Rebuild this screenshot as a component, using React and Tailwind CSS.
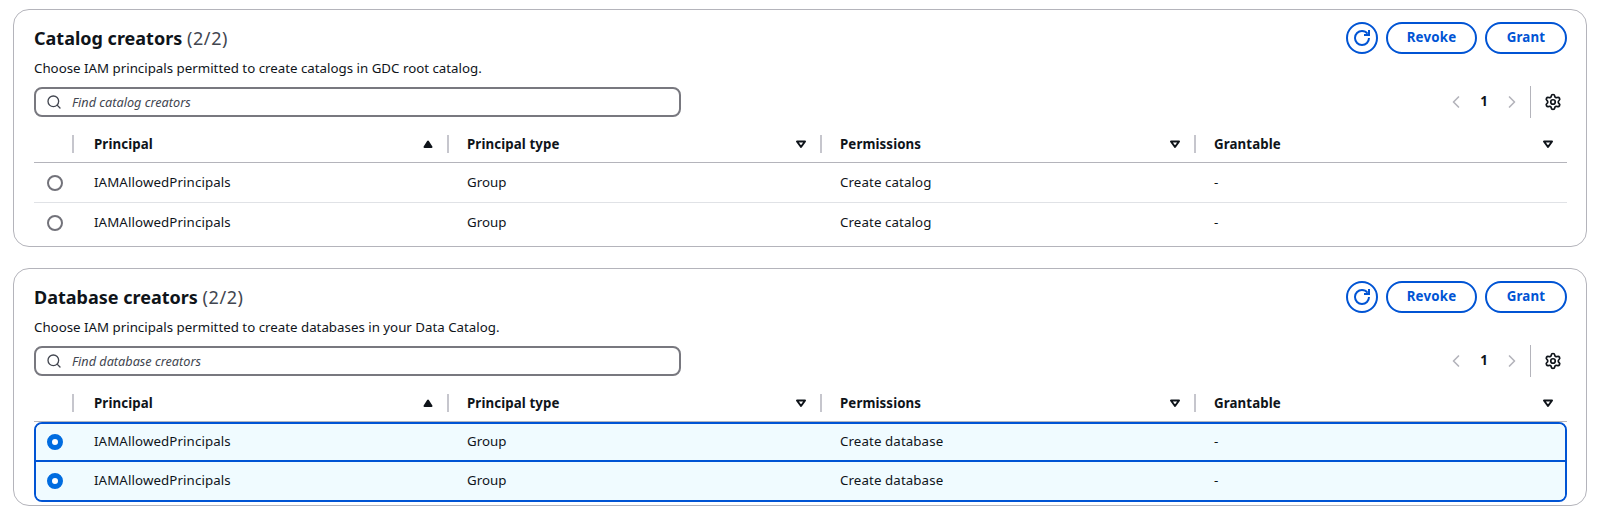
import { Search, ChevronLeft, ChevronRight, Settings } from "lucide-react";

const catalogRows = [
  { principal: "IAMAllowedPrincipals", type: "Group", permissions: "Create catalog", grantable: "-" },
  { principal: "IAMAllowedPrincipals", type: "Group", permissions: "Create catalog", grantable: "-" },
];

const databaseRows = [
  { principal: "IAMAllowedPrincipals", type: "Group", permissions: "Create database", grantable: "-" },
  { principal: "IAMAllowedPrincipals", type: "Group", permissions: "Create database", grantable: "-" },
];

function RefreshIcon() {
  return (
    <svg viewBox="0 0 16 16" className="w-[16px] h-[16px]" fill="none" stroke="currentColor" strokeWidth="2">
      <path d="M10 5h5V0" />
      <path d="M15 8a6.99 6.99 0 0 1-7 7 6.99 6.99 0 0 1-7-7 6.99 6.99 0 0 1 7-7c2.27 0 4.28 1.08 5.56 2.75" />
    </svg>
  );
}

function SortCaret({ active }) {
  if (active) {
    return (
      <svg viewBox="0 0 16 16" className="w-[16px] h-[16px] text-[#0f141a]" fill="currentColor" stroke="currentColor" strokeWidth="2" strokeLinejoin="round">
        <path d="M4.5 11h7L8 5.5z" />
      </svg>
    );
  }
  return (
    <svg viewBox="0 0 16 16" className="w-[16px] h-[16px] text-[#0f141a]" fill="none" stroke="currentColor" strokeWidth="2" strokeLinejoin="round">
      <path d="M4 5.5h8L8 11z" />
    </svg>
  );
}

function HeaderCell({ label, active, first }) {
  return (
    <div className="flex items-center h-[18px] pr-[11px] border-l-2 border-[#c6c6cd]">
      <span className={`font-bold tracking-[0.1px] pt-[1px] text-[#0f141a] ${first ? "pl-[20px]" : "pl-[18px]"}`}>{label}</span>
      <span className="ml-auto">
        <SortCaret active={active} />
      </span>
    </div>
  );
}

function Radio({ checked }) {
  if (checked) {
    return <span className="block w-[16px] h-[16px] rounded-full border-[5px] border-[#006ce0] bg-white" />;
  }
  return <span className="block w-[16px] h-[16px] rounded-full border-2 border-[#72727a] bg-white" />;
}

function Row({ row, last }) {
  return (
    <div className={`grid grid-cols-[38px_375px_373px_374px_373px] items-center h-[40px] text-[#0f141a] ${last ? "" : "border-b border-[#e0e2e6]"}`}>
      <div className="pl-[13px]">
        <Radio />
      </div>
      <div className="pl-[22px] tracking-[0.1px]">{row.principal}</div>
      <div className="pl-[20px]">{row.type}</div>
      <div className="pl-[20px] tracking-[0.1px]">{row.permissions}</div>
      <div className="pl-[20px]">{row.grantable}</div>
    </div>
  );
}

// selected rows sit inside the 2px blue frame, so the first column is 2px narrower
function SelectedRow({ row, first }) {
  return (
    <div className={`grid grid-cols-[36px_375px_373px_374px_371px] items-center bg-[#f0fbff] text-[#0f141a] ${first ? "h-[36px]" : "h-[40px] border-t-2 border-[#0054d4]"}`}>
      <div className="pl-[11px]">
        <Radio checked />
      </div>
      <div className="pl-[22px] tracking-[0.1px]">{row.principal}</div>
      <div className="pl-[20px]">{row.type}</div>
      <div className="pl-[20px] tracking-[0.1px]">{row.permissions}</div>
      <div className="pl-[20px]">{row.grantable}</div>
    </div>
  );
}

function CreatorsCard({ title, description, placeholder, rows, selected }) {
  return (
    <section className="h-[238px] rounded-[16px] border border-[#b4b4bb] bg-white pl-[20px] pr-[19px] pt-[12px]">
      <div className="flex items-start justify-between h-[33px]">
        <h2 className="text-[18px] leading-[32px] font-bold text-[#0f141a]">
          {title} <span className="font-normal tracking-[0.6px] text-[#424650]">(2/2)</span>
        </h2>
        <div className="flex items-center gap-[8px] font-bold tracking-[0.2px] text-[#0054d4]">
          <button className="flex items-center justify-center w-[32px] h-[32px] rounded-full border-2 border-[#0054d4]">
            <RefreshIcon />
          </button>
          <button className="w-[91px] h-[32px] rounded-full border-2 border-[#0054d4]">Revoke</button>
          <button className="w-[82px] h-[32px] rounded-full border-2 border-[#0054d4]">Grant</button>
        </div>
      </div>
      <p className="mt-[2px] leading-[22px] text-[#0f141a]">{description}</p>
      <div className="flex items-center mt-[7px] h-[32px]">
        <div className="flex items-center w-[647px] h-[30px] rounded-[8px] border-2 border-[#78787f] pl-[10px] bg-white">
          <Search size={16} strokeWidth={2} className="text-[#424650]" />
          <span className="ml-[10px] pt-[2px] italic text-[12.7px] text-[#424650]">{placeholder}</span>
        </div>
        <div className="ml-auto flex items-center">
          <ChevronLeft size={20} strokeWidth={2} className="text-[#b4b4bb]" />
          <span className="w-[36px] text-center font-bold text-[#0f141a]">1</span>
          <ChevronRight size={20} strokeWidth={2} className="text-[#b4b4bb]" />
          <span className="ml-[8px] h-[32px] border-l border-[#b4b4bb]" />
          <Settings size={18} strokeWidth={2.25} className="ml-[13px] mr-[5px] text-[#0f141a]" />
        </div>
      </div>
      <div className="grid grid-cols-[38px_375px_373px_374px_373px] items-center h-[45px] pt-[8px] border-b border-[#b4b4bb]">
        <div />
        <HeaderCell label="Principal" active first />
        <HeaderCell label="Principal type" />
        <HeaderCell label="Permissions" />
        <HeaderCell label="Grantable" />
      </div>
      {selected ? (
        <div className="rounded-[8px] border-2 border-[#0054d4] overflow-hidden">
          {rows.map((row, i) => (
            <SelectedRow key={i} row={row} first={i === 0} />
          ))}
        </div>
      ) : (
        rows.map((row, i) => <Row key={i} row={row} last={i === rows.length - 1} />)
      )}
    </section>
  );
}

export default function App() {
  return (
    <div className="min-h-screen bg-white px-[13px] pt-[9px] flex flex-col gap-[21px] text-[13.3px] font-['Noto_Sans',sans-serif]">
      <CreatorsCard
        title="Catalog creators"
        description="Choose IAM principals permitted to create catalogs in GDC root catalog."
        placeholder="Find catalog creators"
        rows={catalogRows}
      />
      <CreatorsCard
        title="Database creators"
        description="Choose IAM principals permitted to create databases in your Data Catalog."
        placeholder="Find database creators"
        rows={databaseRows}
        selected
      />
    </div>
  );
}
